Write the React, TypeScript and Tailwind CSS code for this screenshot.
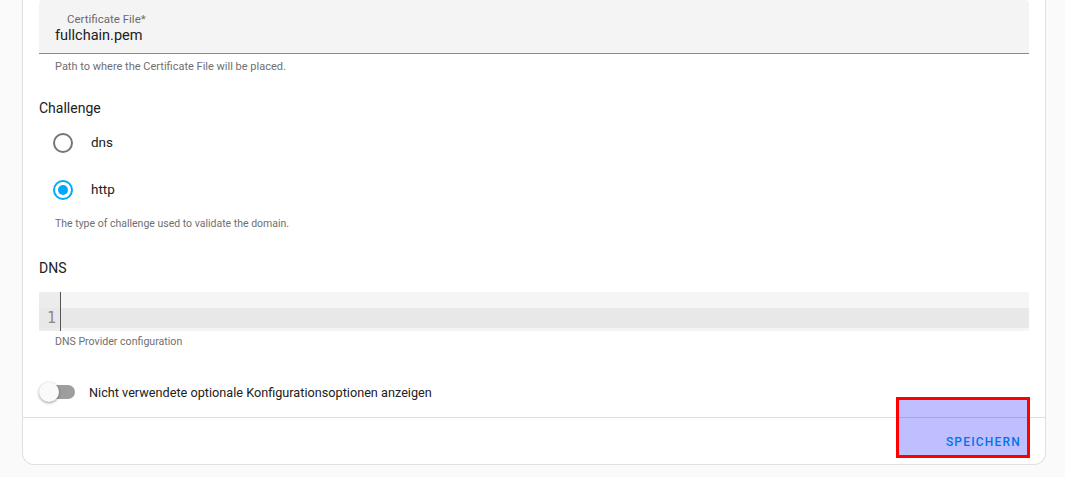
import React from "react";

export default function App() {
  return (
    <div
      className="w-[1065px] h-[477px] bg-[#fafafa] overflow-hidden"
      style={{ fontFamily: "Roboto, 'Liberation Sans', sans-serif" }}
    >
      <div className="relative ml-[22px] w-[1024px] h-[465px] bg-white border-x border-b border-[#e0e0e0] rounded-b-[12px] flex flex-col">
        <div className="px-4 flex flex-col">
          {/* Text field */}
          <div className="h-[54px] bg-[#f4f4f4] border-b border-[#8a8a8a] rounded-t-[4px] px-4 flex flex-col">
            <div className="h-[12px]" />
            <div className="h-[16px] pl-[12px] flex items-center text-[11.5px] text-[#6b6b6b] leading-none">Certificate File*</div>
            <div className="h-[17px] flex items-center text-[14.5px] text-[#212121] leading-none">fullchain.pem</div>
          </div>
          <div className="h-[26px] pl-4 flex items-center text-[11px] text-[#6f6f6f]">Path to where the Certificate File will be placed.</div>
          {/* Challenge */}
          <div className="h-[16px]" />
          <div className="h-[24px] flex items-center text-[14px] text-[#212121]">Challenge</div>
          <div className="h-[46px] flex items-center pl-[14px]">
            <span className="w-[20px] h-[20px] rounded-full border-2 border-[#757575]" />
            <span className="ml-[18px] text-[13.5px] text-[#212121] -mt-[1px]">dns</span>
          </div>
          <div className="h-[47px] flex items-center pl-[14px]">
            <span className="w-[20px] h-[20px] rounded-full border-2 border-[#03a9f4] flex items-center justify-center">
              <span className="w-[10px] h-[10px] rounded-full bg-[#03a9f4]" />
            </span>
            <span className="ml-[18px] text-[13.5px] text-[#212121]">http</span>
          </div>
          <div className="h-[22px] pl-4 flex items-center text-[10.5px] text-[#6f6f6f]">The type of challenge used to validate the domain.</div>
          <div className="h-[21px]" />
          <div className="h-[24px] flex items-center text-[14px] text-[#212121]">DNS</div>
          <div className="h-[12px]" />
          {/* Code editor */}
          <div className="h-[39px] bg-[#f5f5f5] flex">
            <div className="w-[22px] bg-[#ececec] border-r border-[#555] flex flex-col">
              <div className="h-[16px]" />
              <div className="h-[20px] flex items-center justify-end pr-[4px] text-[15px] text-[#8a8a8a] bg-[#e8e8e8]" style={{ fontFamily: "'DejaVu Sans Mono', monospace" }}>1</div>
            </div>
            <div className="flex-1 flex flex-col">
              <div className="h-[16px]" />
              <div className="h-[20px] bg-[#e8e8e8]" />
            </div>
          </div>
          <div className="h-[21px] pl-4 flex items-center text-[10.6px] text-[#6f6f6f]">DNS Provider configuration</div>
          {/* Toggle */}
          <div className="h-[28px]" />
          <div className="h-[24px] flex items-center">
            <div className="relative w-[36px] h-[20px] flex items-center">
              <div className="absolute left-[2px] w-[34px] h-[14px] rounded-full bg-[#9e9e9e]" />
              <div className="absolute left-0 w-[20px] h-[20px] rounded-full bg-[#fafafa] shadow-[0_1px_3px_rgba(0,0,0,0.4)]" />
            </div>
            <span className="ml-[14px] text-[12.7px] text-[#212121] mt-[1px]">Nicht verwendete optionale Konfigurationsoptionen anzeigen</span>
          </div>
        </div>
        <div className="h-[13px]" />
        <div className="border-t border-[#e0e0e0]" />
        <div className="flex-1 flex items-center justify-end pr-[24px]">
          <span className="text-[12px] font-medium tracking-[1.2px] text-[#039be5] mt-[1px]">SPEICHERN</span>
        </div>
        {/* Highlight overlay */}
        <div className="absolute left-[873px] top-[397px] w-[134px] h-[61px] border-[3px] border-[#ff0000] bg-[rgba(0,0,255,0.25)]" />
      </div>
    </div>
  );
}
